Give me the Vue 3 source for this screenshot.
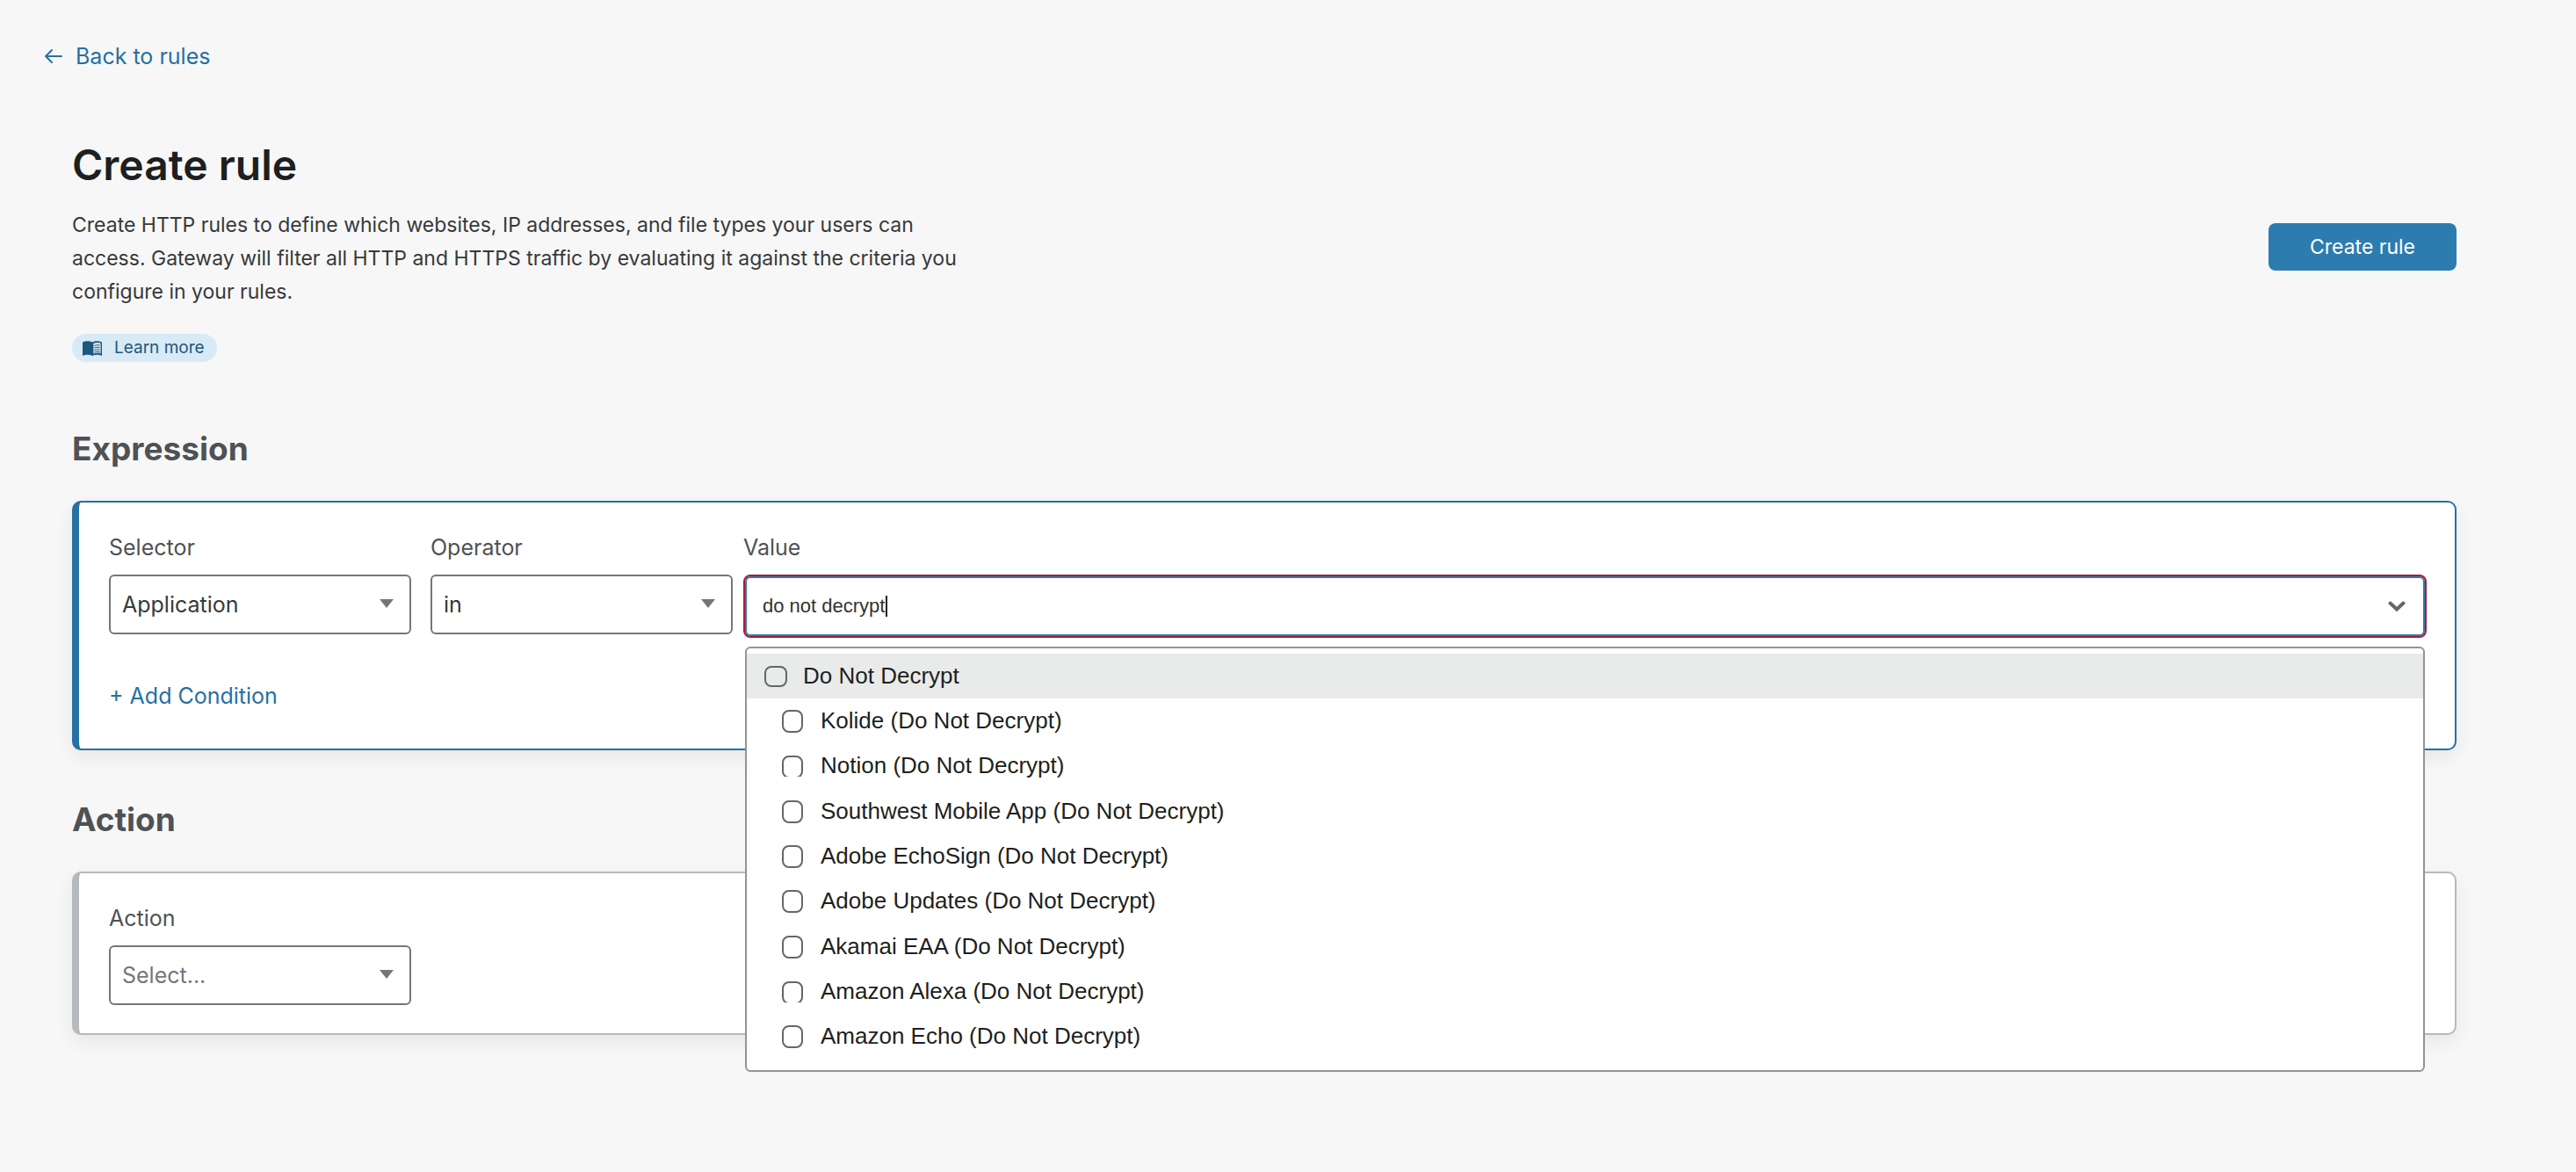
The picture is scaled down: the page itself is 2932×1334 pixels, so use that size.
<script setup>
import { ref } from 'vue'

const selector = ref('Application')
const operator = ref('in')
const action = ref('')
const query = ref('do not decrypt')

const apps = ref([
  { name: 'Do Not Decrypt', parent: true, checked: false },
  { name: 'Kolide (Do Not Decrypt)', checked: false },
  { name: 'Notion (Do Not Decrypt)', checked: false, clipped: true },
  { name: 'Southwest Mobile App (Do Not Decrypt)', checked: false },
  { name: 'Adobe EchoSign (Do Not Decrypt)', checked: false },
  { name: 'Adobe Updates (Do Not Decrypt)', checked: false },
  { name: 'Akamai EAA (Do Not Decrypt)', checked: false },
  { name: 'Amazon Alexa (Do Not Decrypt)', checked: false, clipped: true },
  { name: 'Amazon Echo (Do Not Decrypt)', checked: false },
])
</script>

<template>
  <div class="page">
    <nav class="topbar">
      <a class="back" href="#rules">
        <svg class="back-icon" viewBox="0 0 22 18" aria-hidden="true">
          <path d="M20 9H2M9 2L2 9l7 7" />
        </svg>
        <span>Back to rules</span>
      </a>
    </nav>

    <main class="content">
      <header class="intro">
        <div class="intro-text">
          <h1>Create rule</h1>
          <p>
            Create HTTP rules to define which websites, IP addresses, and file types your users can
            access. Gateway will filter all HTTP and HTTPS traffic by evaluating it against the criteria you
            configure in your rules.
          </p>
          <a class="learn" href="#learn">
            <svg class="book" viewBox="0 0 22 17" aria-hidden="true">
              <path
                fill-rule="evenodd"
                d="M0 1.6C3.5-.2 7.800-.2 11 1.600C14.200-.2 18.500-.2 22 1.600V17C18.500 15.400 14.200 15.400 11 17C7.800 15.400 3.500 15.400 0 17ZM12.400 2.800V14.600C15 13.700 18 13.600 20.600 14.300V2.500C18 1.700 15 1.800 12.400 2.800Z"
              />
              <path class="lines" d="M13.500 5.400Q16.500 4.300 19.500 4.900M13.500 8Q16.500 6.900 19.500 7.500M13.500 10.600Q16.500 9.500 19.500 10.100M13.500 13Q16.500 12 19.500 12.500" />
            </svg>
            <span>Learn more</span>
          </a>
        </div>
        <button class="primary" type="button">Create rule</button>
      </header>

      <section>
        <h2>Expression</h2>
        <div class="card active">
          <div class="fields">
            <div class="pair">
              <div class="field">
                <label for="selector">Selector</label>
                <div class="select">
                  <select id="selector" v-model="selector">
                    <option>Application</option>
                  </select>
                </div>
              </div>
              <div class="field">
                <label for="operator">Operator</label>
                <div class="select">
                  <select id="operator" v-model="operator">
                    <option>in</option>
                  </select>
                </div>
              </div>
            </div>
            <div class="field value">
              <label for="value">Value</label>
              <div class="combo">
                <input id="value" v-model="query" type="text" autocomplete="off" />
                <span class="caret"></span>
                <svg class="chevron" viewBox="0 0 20 12" aria-hidden="true">
                  <path d="M2.500 2.500L10 9.500l7.500-7" />
                </svg>
                <div class="menu">
                  <label
                    v-for="app in apps"
                    :key="app.name"
                    class="option"
                    :class="{ parent: app.parent }"
                  >
                    <span class="box" :class="{ clipped: app.clipped }">
                      <input v-model="app.checked" type="checkbox" />
                    </span>
                    <span class="name">{{ app.name }}</span>
                  </label>
                </div>
              </div>
            </div>
          </div>
          <button class="add" type="button">+ Add Condition</button>
        </div>
      </section>

      <section>
        <h2>Action</h2>
        <div class="card">
          <div class="field">
            <label for="action">Action</label>
            <div class="select">
              <select id="action" v-model="action" class="empty">
                <option value="">Select...</option>
              </select>
            </div>
          </div>
        </div>
      </section>
    </main>
  </div>
</template>

<style>
body {
  margin: 0;
  background: #f7f7f7;
}
</style>

<style scoped>
.page {
  box-sizing: border-box;
  min-height: 100vh;
  padding: 48px 136px 100px 82px;
  background: #f7f7f7;
  color: #36393a;
  font-family: Inter, "Liberation Sans", sans-serif;
  font-optical-sizing: none;
  font-size: 25px;
  line-height: 32px;
}

.topbar {
  display: flex;
  margin-left: -32px;
}

.back {
  display: flex;
  align-items: center;
  gap: 14px;
  color: #2670a2;
  text-decoration: none;
}

.back-icon {
  width: 22px;
  height: 18px;
  fill: none;
  stroke: currentColor;
  stroke-width: 2;
  stroke-linecap: round;
  stroke-linejoin: round;
}

.intro {
  display: flex;
  align-items: center;
  justify-content: space-between;
  margin-top: 70px;
  padding-bottom: 20px;
}

.intro-text {
  width: 1020px;
}

h1 {
  margin: 0 0 11px;
  color: #1d1f20;
  font-size: 48px;
  font-weight: 600;
  line-height: 76px;
}

p {
  margin: 0 0 29px;
  font-size: 23px;
  line-height: 38px;
}

.learn {
  display: flex;
  align-items: center;
  gap: 14px;
  box-sizing: border-box;
  width: fit-content;
  height: 32px;
  padding: 0 14px 0 12px;
  border-radius: 16px;
  background: #d7eaf6;
  color: #1f567c;
  font-size: 19px;
  line-height: 32px;
  text-decoration: none;
}

.book {
  width: 22px;
  height: 17px;
  fill: currentColor;
}

.lines {
  fill: none;
  stroke: currentColor;
  stroke-width: 1;
}

.primary {
  width: 214px;
  height: 54px;
  padding: 0;
  border: 0;
  border-radius: 8px;
  background: #2c7cb0;
  color: #fff;
  font: inherit;
  font-size: 23px;
}

h2 {
  margin: 55px 0 35px;
  color: #4e5255;
  font-size: 37px;
  font-weight: 700;
  line-height: 48px;
}

.card {
  padding: 32px;
  padding-left: 34px;
  border: 2px solid #b6babd;
  border-left-width: 8px;
  border-radius: 10px;
  background: #fff;
  box-shadow: 0 8px 20px rgba(40, 50, 70, 0.08);
}

.card.active {
  border-color: #2670a2;
}

.fields {
  display: flex;
  gap: 12px;
}

.pair {
  display: flex;
  gap: 22px;
}

.field {
  display: flex;
  flex-direction: column;
  gap: 12px;
}

.field > label {
  color: #4e5255;
  line-height: 38px;
}

.select {
  position: relative;
  width: 344px;
}

.select::after {
  content: "";
  position: absolute;
  top: 28px;
  right: 20px;
  border: 8px solid transparent;
  border-top: 10px solid #72777b;
  border-bottom: 0;
  pointer-events: none;
}

select {
  appearance: none;
  display: block;
  box-sizing: border-box;
  width: 100%;
  height: 68px;
  padding: 0 48px 0 13px;
  border: 2px solid #72777b;
  border-radius: 6px;
  background: #fff;
  color: #36393a;
  font: inherit;
}

select.empty {
  color: #72777b;
}

.value {
  flex: 1;
}

.combo {
  position: relative;
}

.combo > input {
  display: block;
  box-sizing: border-box;
  width: 100%;
  height: 72px;
  padding: 0 60px 0 20px;
  border: 2px solid #a81c35;
  border-radius: 8px;
  outline: 0;
  background: #fff;
  box-shadow: inset 0 0 0 2px #2c7cb0;
  color: #333;
  font-family: "Liberation Sans", Arial, sans-serif;
  font-size: 22px;
}

.caret {
  position: absolute;
  top: 24px;
  left: 162px;
  width: 2px;
  height: 24px;
  background: #222;
}

.chevron {
  position: absolute;
  top: 30px;
  right: 24px;
  width: 20px;
  height: 12px;
  fill: none;
  stroke: #666;
  stroke-width: 4;
  stroke-linecap: round;
}

.menu {
  position: absolute;
  top: 82px;
  right: 2px;
  left: 2px;
  z-index: 1;
  display: grid;
  grid-auto-rows: 1fr;
  box-sizing: border-box;
  height: 484px;
  padding: 6px 0 12px;
  border: 2px solid #8f9599;
  border-radius: 6px;
  background: #fff;
  color: #1d1f20;
  font-family: "Liberation Sans", Arial, sans-serif;
  font-size: 26px;
}

.option {
  display: flex;
  align-items: center;
  gap: 20px;
  padding-left: 40px;
}

.option.parent {
  gap: 18px;
  padding-left: 20px;
  background: #e9ebea;
}

.name {
  padding-bottom: 2px;
}

.box {
  height: 26px;
}

.box.clipped {
  height: 24px;
  overflow: hidden;
}

.box input {
  appearance: none;
  display: block;
  box-sizing: border-box;
  width: 24px;
  height: 26px;
  margin: 0;
  border: 2px solid #62676a;
  border-radius: 8px;
  background: #fff;
}

.parent .box {
  height: 24px;
}

.parent .box input {
  width: 26px;
  height: 24px;
  background: transparent;
}

.add {
  display: block;
  margin: 50px 0 12px;
  padding: 0;
  border: 0;
  background: none;
  color: #2670a2;
  font: inherit;
}
</style>
